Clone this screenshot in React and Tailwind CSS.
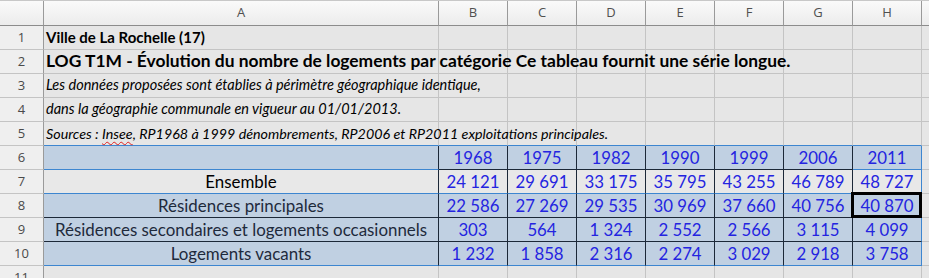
import React from "react";

const UI = { fontFamily: '"Open Sans", "Noto Sans", sans-serif' };
const CELL = { fontFamily: 'Lato, "Carlito", "Liberation Sans", sans-serif' };

const letters = ["B", "C", "D", "E", "F", "G", "H"];

const years = ["1968", "1975", "1982", "1990", "1999", "2006", "2011"];
const rowsData = [
  { n: 7, label: "Ensemble", vals: ["24 121", "29 691", "33 175", "35 795", "43 255", "46 789", "48 727"] },
  { n: 8, label: "Résidences principales", vals: ["22 586", "27 269", "29 535", "30 969", "37 660", "40 756", "40 870"] },
  { n: 9, label: "Résidences secondaires et logements occasionnels", vals: ["303", "564", "1 324", "2 552", "2 566", "3 115", "4 099"] },
  { n: 10, label: "Logements vacants", vals: ["1 232", "1 858", "2 316", "2 274", "3 029", "2 918", "3 758"] },
];

function RowNum({ n }) {
  return (
    <div
      className="w-[44px] shrink-0 h-full border-r border-b border-r-[#9a9a9a] border-b-[#c4c4c4] bg-[#efefef] flex items-center justify-center text-[13px] text-[#4a4a4a]"
      style={UI}
    >
      {n}
    </div>
  );
}

function TextRow({ n, children, textClass, bottomClass = "border-b-[#c4c4c4]" }) {
  return (
    <div className="flex h-[24px]">
      <RowNum n={n} />
      <div className={`w-[395px] shrink-0 h-full border-r border-b border-r-[#c4c4c4] ${bottomClass} bg-[#e6e6e6] flex ${textClass} pl-[2px]`}>
        {children}
      </div>
      {letters.map((l) => (
        <div key={l} className={`w-[69px] shrink-0 h-full border-r border-b border-r-[#c4c4c4] ${bottomClass} bg-[#e6e6e6]`} />
      ))}
      <div className="flex-1 h-full border-b border-b-[#c4c4c4] bg-[#e6e6e6]" />
    </div>
  );
}

export default function App() {
  return (
    <div className="w-[929px] h-[278px] bg-[#e6e6e6] overflow-hidden" style={CELL}>
      {/* column header */}
      <div className="flex h-[26px] border-t border-t-[#c8c8c8] bg-[#fafafa]">
        <div className="w-[44px] shrink-0 h-full border-r border-b border-r-[#9a9a9a] border-b-[#8c8c8c] bg-gradient-to-b from-[#fafafa] to-[#ececec]" />
        <div
          className="w-[395px] shrink-0 h-full border-r border-b border-r-[#9a9a9a] border-b-[#8c8c8c] bg-gradient-to-b from-[#fafafa] to-[#ececec] flex items-center justify-center text-[13px] text-[#505050]"
          style={UI}
        >
          A
        </div>
        {letters.map((l) => (
          <div
            key={l}
            className="w-[69px] shrink-0 h-full border-r border-b border-r-[#9a9a9a] border-b-[#8c8c8c] bg-gradient-to-b from-[#fafafa] to-[#ececec] flex items-center justify-center text-[13px] text-[#505050]"
            style={UI}
          >
            {l}
          </div>
        ))}
        <div className="flex-1 h-full border-b border-b-[#8c8c8c] bg-gradient-to-b from-[#fafafa] to-[#ececec]" />
      </div>

      <TextRow n={1} textClass="items-center">
        <span className="relative z-10 whitespace-nowrap font-bold text-[15px] text-black">Ville de La Rochelle (17)</span>
      </TextRow>
      <TextRow n={2} textClass="items-center">
        <span className="relative z-10 whitespace-nowrap font-bold text-[17.4px] text-black">
          LOG T1M - Évolution du nombre de logements par catégorie Ce tableau fournit une série longue.
        </span>
      </TextRow>
      <TextRow n={3} textClass="items-end pb-[1px]">
        <span className="relative z-10 whitespace-nowrap italic text-[14.5px] text-black">
          Les données proposées sont établies à périmètre géographique identique,
        </span>
      </TextRow>
      <TextRow n={4} textClass="items-end pb-[1px]">
        <span className="relative z-10 whitespace-nowrap italic text-[14.5px] text-black">
          dans la géographie communale en vigueur au 01/01/2013.
        </span>
      </TextRow>
      <TextRow n={5} textClass="items-end pb-[1px]" bottomClass="border-b-[#3d86d0]">
        <span className="relative z-10 whitespace-nowrap italic text-[14.3px] text-black">
          Sources :{" "}
          <span className="underline decoration-wavy decoration-[#e02020] decoration-1 underline-offset-2">Insee</span>
          , RP1968 à 1999 dénombrements, RP2006 et RP2011 exploitations principales.
        </span>
      </TextRow>

      {/* row 6: years */}
      <div className="flex h-[24px]">
        <RowNum n={6} />
        <div className="w-[395px] shrink-0 h-full border-r border-b border-r-[#1c2838] border-b-[#3d86d0] bg-[#c0d0e2]" />
        {years.map((y, i) => (
          <div
            key={y}
            className={`w-[69px] shrink-0 h-full border-r border-b ${i === 6 ? "border-r-[#3d86d0] border-b-[#3d86d0]" : "border-r-[#1c2838] border-b-[#1c2838]"} bg-[#c0d0e2] flex items-center justify-center text-[16.8px] text-[#2424e0]`}
          >
            {y}
          </div>
        ))}
        <div className="flex-1 h-full border-b border-b-[#c4c4c4] bg-[#e6e6e6]" />
      </div>

      {rowsData.map((r) => {
        const isEns = r.n === 7;
        const bottom = r.n === 7 || r.n === 10 ? "border-b-[#3d86d0]" : "border-b-[#1c2838]";
        const bg = isEns ? "bg-[#e8e8e8]" : "bg-[#c0d0e2]";
        return (
          <div key={r.n} className="flex h-[24px]">
            <RowNum n={r.n} />
            <div
              className={`w-[395px] shrink-0 h-full border-r border-b border-r-[#1c2838] ${bottom} ${bg} flex items-center justify-center text-[16.9px] ${isEns ? "text-black" : "text-[#1e2a3c]"}`}
            >
              {r.label}
            </div>
            {r.vals.map((v, i) => {
              const sel = r.n === 8 && i === 6;
              return (
                <div
                  key={i}
                  className={`w-[69px] shrink-0 h-full border-r border-b ${i === 6 ? "border-r-[#3d86d0]" : "border-r-[#1c2838]"} ${bottom} ${bg} flex items-center justify-center text-[16.8px] text-[#2424e0] relative`}
                >
                  {sel && <div className="absolute -left-[2px] -top-[2px] w-[71px] h-[26px] border-[3px] border-black" />}
                  {v}
                </div>
              );
            })}
            <div className="flex-1 h-full border-b border-b-[#c4c4c4] bg-[#e6e6e6]" />
          </div>
        );
      })}

      <TextRow n={11} textClass="items-center">
        <span />
      </TextRow>
    </div>
  );
}
